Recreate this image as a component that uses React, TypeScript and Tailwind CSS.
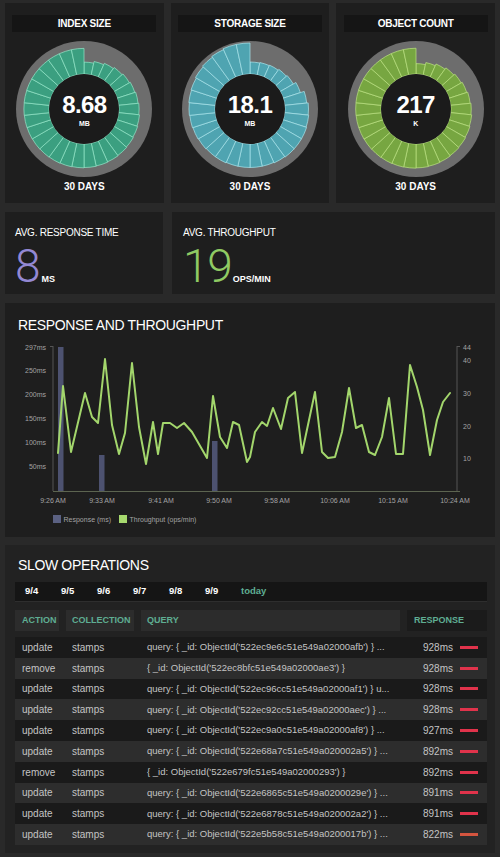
import React from 'react'

type GaugeProps = {
  title: string;
  value: string;
  unit: string;
  radii: number[];
  fill: string;
  stroke: string;
}

const pt = (r: number, deg: number) => {
  const a = ((deg - 90) * Math.PI) / 180;
  return [70 + r * Math.cos(a), 70 + r * Math.sin(a)];
}

const segment = (i: number, r: number, ri = 35) => {
  const a0 = i * 12;
  const a1 = a0 + 12;
  const [x0, y0] = pt(ri, a0);
  const [x1, y1] = pt(r, a0);
  const [x2, y2] = pt(r, a1);
  const [x3, y3] = pt(ri, a1);
  return `M${x0},${y0} L${x1},${y1} A${r},${r} 0 0 1 ${x2},${y2} L${x3},${y3} A${ri},${ri} 0 0 0 ${x0},${y0} Z`;
}

const Gauge = ({ title, value, unit, radii, fill, stroke }: GaugeProps) => {
  return (
    <div className="h-[200px] bg-[#1e1e1e] pt-3 flex flex-col items-center">
      <div className="w-[144px] h-[17px] bg-[#151515] flex items-center justify-center text-[10px] font-bold text-white tracking-tight">
        {title}
      </div>
      <div className="relative mt-[7px] w-[140px] h-[140px]">
        <svg width="140" height="140" viewBox="0 0 140 140">
          <circle cx="70" cy="70" r="68" fill="#6d6d6d" />
          {radii.map((r, i) => (
            <path key={i} d={segment(i, r)} fill={fill} stroke={stroke} strokeWidth="0.7" />
          ))}
          <circle cx="70" cy="70" r="35" fill="#1b1b1b" />
        </svg>
        <div className="absolute inset-0 flex flex-col items-center justify-center text-white">
          <span className="text-[24px] font-bold leading-none tracking-tight mt-[2px]">{value}</span>
          <span className="text-[7px] font-bold leading-none mt-[3px]">{unit}</span>
        </div>
      </div>
      <div className="mt-[2px] leading-[12px] text-[10px] font-bold text-white">30 DAYS</div>
    </div>
  )
}

const indexRadii = Array.from({ length: 30 }, (_, i) => 45 + 16 * (1 - Math.exp(-(i + 1) / 8)));
const objectRadii = Array.from({ length: 30 }, (_, i) => 43 + 18 * (1 - Math.exp(-(i + 1) / 7)));
const storageRadii = [47, 47.5, 48, 49, 50, 53, 57, 58.5, 59, 59.5, 59.5, 59.5, 59, 58.5, 58.5, 58.5, 58.5, 59, 59, 59.5, 60, 60.5, 61, 61.5, 62, 63, 64, 65, 66, 66];

const line: [number, number][] = [
  [58, 453], [63, 386], [71, 452], [85, 393], [92, 417], [98, 423], [105, 359], [112, 425], [119, 454],
  [125, 433], [132, 363], [139, 427], [146, 464], [153, 422], [158, 454], [163, 423], [170, 423],
  [177, 428], [184, 423], [192, 432], [207, 458], [213, 396], [220, 437], [227, 448], [233, 422],
  [239, 425], [247, 462], [250, 457], [255, 432], [262, 422], [267, 426], [273, 408], [281, 429],
  [288, 398], [295, 392], [302, 453], [315, 392], [322, 452], [328, 458], [335, 457], [342, 432],
  [349, 388], [356, 428], [362, 425], [369, 452], [375, 455], [382, 437], [389, 398], [396, 454],
  [403, 454], [410, 365], [417, 387], [423, 410], [430, 455], [437, 420], [443, 402], [450, 393],
];

const leftTicks: [string, number][] = [['297ms', 347], ['250ms', 370], ['200ms', 394], ['150ms', 418], ['100ms', 442], ['50ms', 466]];
const rightTicks: [string, number][] = [['44', 347], ['40', 360], ['30', 393], ['20', 426], ['10', 458]];
const xTicks: [string, number][] = [['9:26 AM', 53], ['9:33 AM', 102], ['9:41 AM', 161], ['9:50 AM', 219], ['9:58 AM', 277], ['10:06 AM', 335], ['10:15 AM', 393], ['10:24 AM', 455]];

const Chart = () => {
  const d = line.map(([x, y], i) => `${i ? 'L' : 'M'}${x},${y}`).join(' ');
  return (
    <svg width="490" height="198" viewBox="5 337 490 198" className="block">
      <g fontFamily="'Liberation Sans', Arial, sans-serif" fontSize="7" fill="#a3a3a3">
        {leftTicks.map(([t, y]) => (
          <text key={t} x="46" y={y + 2.5} textAnchor="end">{t}</text>
        ))}
        {rightTicks.map(([t, y]) => (
          <text key={t} x="463" y={y + 2.5}>{t}</text>
        ))}
        {xTicks.map(([t, x]) => (
          <text key={t} x={x} y="503" textAnchor="middle">{t}</text>
        ))}
        <rect x="53" y="515" width="8" height="8" fill="#5b6182" />
        <text x="63.5" y="522">Response (ms)</text>
        <rect x="119" y="515" width="8" height="8" fill="#a6d96e" />
        <text x="129.5" y="522">Throughput (ops/min)</text>
      </g>
      <line x1="53" y1="346" x2="53" y2="491" stroke="#555" strokeWidth="1" />
      <line x1="50" y1="346.5" x2="53" y2="346.5" stroke="#555" strokeWidth="1" />
      <line x1="457" y1="346" x2="457" y2="491" stroke="#555" strokeWidth="1" />
      <line x1="457" y1="346.5" x2="460" y2="346.5" stroke="#555" strokeWidth="1" />
      <line x1="53" y1="491.5" x2="460" y2="491.5" stroke="#5c6450" strokeWidth="1" />
      <rect x="58" y="347" width="5.5" height="144" fill="#4d5270" />
      <rect x="99" y="455" width="5.5" height="36" fill="#4d5270" />
      <rect x="212" y="441" width="5.5" height="50" fill="#4d5270" />
      <path d={d} fill="none" stroke="#a3d66c" strokeWidth="2" strokeLinejoin="round" strokeLinecap="round" />
    </svg>
  )
}

const rows = [
  ['update', "query: { _id: ObjectId('522ec9e6c51e549a02000afb') } ...", '928ms'],
  ['remove', "{ _id: ObjectId('522ec8bfc51e549a02000ae3') }", '928ms'],
  ['update', "query: { _id: ObjectId('522ec96cc51e549a02000af1') } u...", '928ms'],
  ['update', "query: { _id: ObjectId('522ec92cc51e549a02000aec') } ...", '928ms'],
  ['update', "query: { _id: ObjectId('522ec9a0c51e549a02000af8') } ...", '927ms'],
  ['update', "query: { _id: ObjectId('522e68a7c51e549a020002a5') } ...", '892ms'],
  ['remove', "{ _id: ObjectId('522e679fc51e549a02000293') }", '892ms'],
  ['update', "query: { _id: ObjectId('522e6865c51e549a0200029e') } ...", '891ms'],
  ['update', "query: { _id: ObjectId('522e6878c51e549a020002a2') } ...", '891ms'],
  ['update', "query: { _id: ObjectId('522e5b58c51e549a0200017b') } ...", '822ms'],
];

const days = ['9/4', '9/5', '9/6', '9/7', '9/8', '9/9'];

const App = () => {
  return (
    <div className="w-[500px] min-h-[857px] bg-[#292929] px-[5px] pt-[3px] pb-[4px] font-['Liberation_Sans',Arial,sans-serif]">
      <div className="grid grid-cols-3 gap-x-[7px]">
        <Gauge title="INDEX SIZE" value="8.68" unit="MB" radii={indexRadii} fill="#3b9f80" stroke="#93e6c9" />
        <Gauge title="STORAGE SIZE" value="18.1" unit="MB" radii={storageRadii} fill="#4fa4b1" stroke="#a9e5ec" />
        <Gauge title="OBJECT COUNT" value="217" unit="K" radii={objectRadii} fill="#77a641" stroke="#bce383" />
      </div>

      <div className="grid grid-cols-[158px_1fr] gap-x-[9px] mt-[9px]">
        <div className="h-[82px] bg-[#1e1e1e] pl-[10px] pt-[16px]">
          <div className="text-[10px] leading-[10px] text-white tracking-tight">AVG. RESPONSE TIME</div>
          <div className="flex items-baseline mt-[5px]">
            <span className="font-['Roboto',sans-serif] font-light text-[46px] leading-none text-[#9388d3]">8</span>
            <span className="text-[9px] font-bold text-white ml-[1px]">MS</span>
          </div>
        </div>
        <div className="h-[82px] bg-[#1e1e1e] pl-[11px] pt-[16px]">
          <div className="text-[10px] leading-[10px] text-white tracking-tight">AVG. THROUGHPUT</div>
          <div className="flex items-baseline mt-[5px]">
            <span className="font-['Roboto',sans-serif] font-light text-[46px] leading-none text-[#8fca63] tracking-tight">19</span>
            <span className="text-[9px] font-bold text-white ml-[1px]">OPS/MIN</span>
          </div>
        </div>
      </div>

      <div className="mt-[9px] bg-[#1e1e1e] pt-[12px] pb-[2px]">
        <h2 className="pl-[13px] text-[14px] leading-[20px] text-white tracking-tight">RESPONSE AND THROUGHPUT</h2>
        <div className="mt-[2px]">
          <Chart />
        </div>
      </div>

      <div className="mt-[8px] bg-[#222222] pt-[10px] pl-[10px] pr-[8px] pb-[8px]">
        <h2 className="pl-[3px] text-[14px] leading-[20px] text-white tracking-tight">SLOW OPERATIONS</h2>
        <div className="mt-[7px] h-[20px] bg-[#151515] border-b border-[#2e2e2e] flex items-center pl-[10px] text-[9.5px] font-bold">
          {days.map((d) => (
            <span key={d} className="w-[36px] text-white">{d}</span>
          ))}
          <span className="text-[#5fae93]">today</span>
        </div>
        <div className="mt-[8px] h-[21px] grid grid-cols-[44px_68px_259px_80px] gap-x-[7px] text-[9px] font-bold text-[#5fae93]">
          <div className="bg-[#2c2c2c] flex items-center pl-[7px]">ACTION</div>
          <div className="bg-[#2c2c2c] flex items-center pl-[6px]">COLLECTION</div>
          <div className="bg-[#2c2c2c] flex items-center pl-[6px]">QUERY</div>
          <div className="bg-[#1b1b1b] flex items-center pl-[7px]">RESPONSE</div>
        </div>
        <div className="mt-[6px]">
          {rows.map(([action, query, ms], i) => (
            <div
              key={i}
              className={`h-[20.8px] grid grid-cols-[44px_68px_259px_80px] gap-x-[7px] items-center text-[#c4c4c4] ${i % 2 ? 'bg-[#2d2d2d]' : 'bg-[#1a1a1a]'}`}
            >
              <span className="pl-[7px] text-[10px]">{action}</span>
              <span className="pl-[6px] text-[10px]">stamps</span>
              <span className="pl-[6px] text-[9.5px] whitespace-nowrap overflow-hidden">{query}</span>
              <span className="flex items-center justify-end gap-[7px] pr-[9px]">
                <span className="text-[10px]">{ms}</span>
                <span className={`w-[18px] h-[3px] ${i === 9 ? 'bg-[#d4553f]' : 'bg-[#e0334b]'}`} />
              </span>
            </div>
          ))}
        </div>
      </div>
    </div>
  )
}

export default App
